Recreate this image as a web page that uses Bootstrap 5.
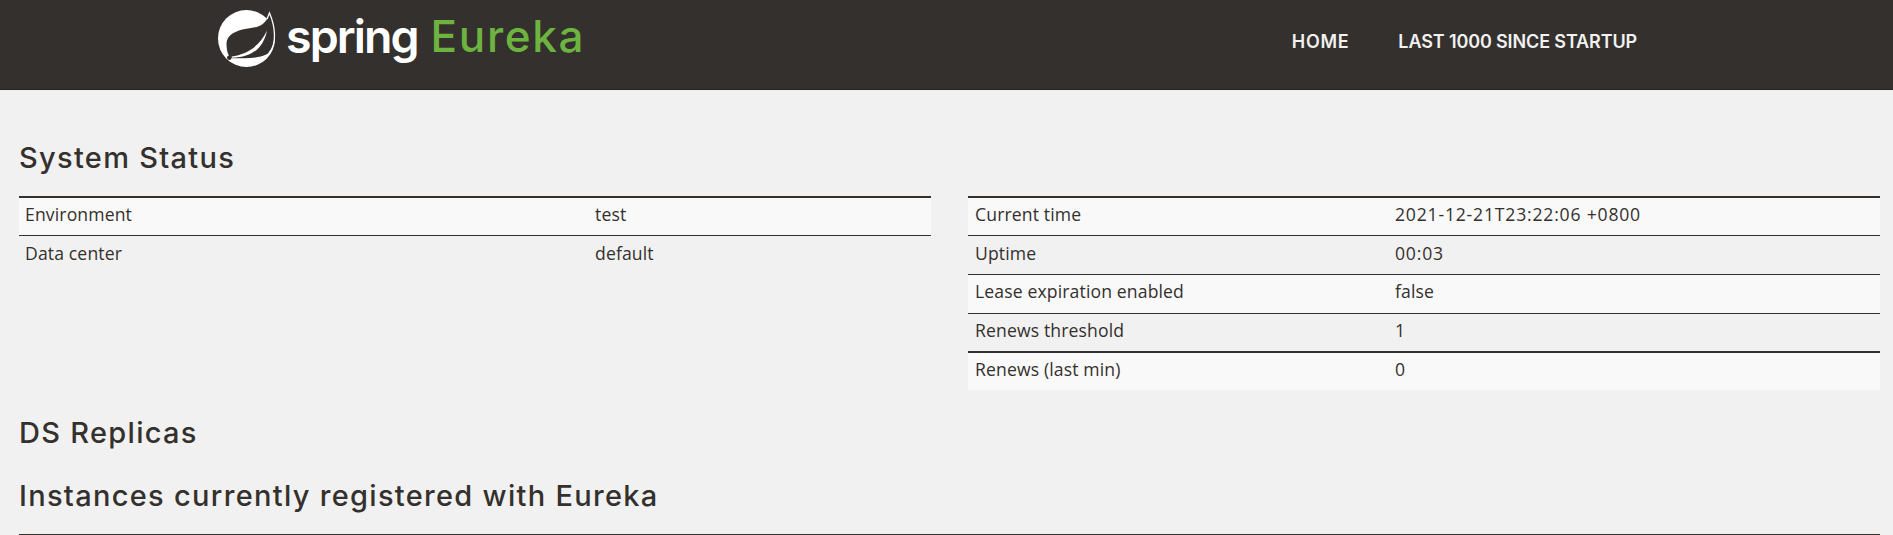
<!DOCTYPE html>
<html lang="en">
<head>
<meta charset="utf-8">
<title>Eureka</title>
<link rel="stylesheet" href="https://cdn.jsdelivr.net/npm/bootstrap@5.3.0/dist/css/bootstrap.min.css">
<style>
  body { background: #f1f1f1; color: #34302d; font-family: "Open Sans", "Noto Sans", sans-serif; font-size: 17.6px; line-height: 24px; letter-spacing: .13px; overflow: hidden; }
  .topbar { background: #34302d; height: 90px; border-bottom: 1px solid #2b2020; padding: 0 256px 0 218px; }
  .brand { padding-top: 10px; height: 70px; font-family: Inter, sans-serif; line-height: 56px; }
  .brand span { margin-top: -2px; }
  .brand-spring { color: #fff; font-size: 46.5px; font-weight: 600; letter-spacing: -1.9px; margin-left: 11px; width: 144.5px; }
  .brand-eureka { color: #6db33f; font-size: 44px; font-weight: 500; letter-spacing: 1.7px; }
  .menu { gap: 49px; padding-top: 30px; }
  .menu a { color: #f1f1f1; font: 600 18px/24px Inter, sans-serif; text-decoration: none; letter-spacing: -.13px; }
  .menu a:first-child { letter-spacing: .7px; }
  .page { padding: 52px 13px 0 19px; }
  h1 { font: 500 29px/32px Inter, sans-serif; letter-spacing: 1.3px; margin: 0; }
  .page h1 + h1 { margin-top: 31px; }
  .status { display: grid; grid-template-columns: 912px 912px; column-gap: 37px; margin-top: 22px; height: 221px; align-items: start; }
  .status table { width: 912px; table-layout: fixed; border-collapse: separate; border-spacing: 0; margin: 0; color: inherit; }
  .status td { border: 0; border-top: 1px solid #34302d; padding: 4px 7px 0; height: 39px; vertical-align: top; background: none; box-shadow: none; color: inherit; }
  .status tr:nth-child(odd) td { background: #f9f9f9; }
  .status tr:first-child td { border-top-width: 2px; }
  .status tr:nth-child(2) td { padding-top: 5px; }
  .status tr:nth-child(4) td { height: 38px; }
  .status tr:nth-child(5) td { border-top-width: 2px; }
  .status .env td:first-child { padding-left: 6px; }
  .status .stamp { letter-spacing: .8px; }
  .instances { border-top: 1px solid #34302d; margin-top: 22px; }
</style>
</head>
<body>
<nav class="topbar d-flex justify-content-between">
  <div class="brand d-flex">
    <svg width="57" height="57" viewBox="0 0 57 57" overflow="visible">
      <circle cx="28.500" cy="28.500" r="28.500" fill="#fff"/>
      <path d="M51.500 3L58 3V32C57 18 54 8 51.500 3ZM51.500 3L49.500 8L44 3Z" fill="#34302d"/>
      <path d="M51.500 4C47 15 42 17 30 18.500C18 20 9 25 8.500 33C8.500 38 9 42 11 46L14 48.300C27 48 42 49 50 43.500C59 36 57 17 51.500 4Z" fill="#34302d"/>
      <path d="M49 9L51.500 3C57.500 17 59 34 51 43" fill="none" stroke="#fff" stroke-width="1.300"/>
      <path d="M13.500 46.500C29 44 41 37 49 20.500C46 36 36 47.500 14 47.800Z" fill="#fff"/>
      <circle cx="11.300" cy="47.700" r="2.300" fill="#34302d"/>
    </svg>
    <span class="brand-spring">spring</span><span class="brand-eureka">Eureka</span>
  </div>
  <div class="menu d-flex"><a href="#">HOME</a><a href="#">LAST 1000 SINCE STARTUP</a></div>
</nav>
<main class="page">
  <h1>System Status</h1>
  <div class="status">
    <table class="table env">
      <colgroup><col style="width:569px"><col></colgroup>
      <tbody>
        <tr><td>Environment</td><td>test</td></tr>
        <tr><td>Data center</td><td>default</td></tr>
      </tbody>
    </table>
    <table class="table">
      <colgroup><col style="width:420px"><col></colgroup>
      <tbody>
        <tr><td>Current time</td><td class="stamp">2021-12-21T23:22:06 +0800</td></tr>
        <tr><td>Uptime</td><td class="stamp">00:03</td></tr>
        <tr><td>Lease expiration enabled</td><td>false</td></tr>
        <tr><td>Renews threshold</td><td>1</td></tr>
        <tr><td>Renews (last min)</td><td>0</td></tr>
      </tbody>
    </table>
  </div>
  <h1>DS Replicas</h1>
  <h1>Instances currently registered with Eureka</h1>
  <div class="instances"></div>
</main>
<script src="https://cdn.jsdelivr.net/npm/bootstrap@5.3.0/dist/js/bootstrap.bundle.min.js"></script>
</body>
</html>
